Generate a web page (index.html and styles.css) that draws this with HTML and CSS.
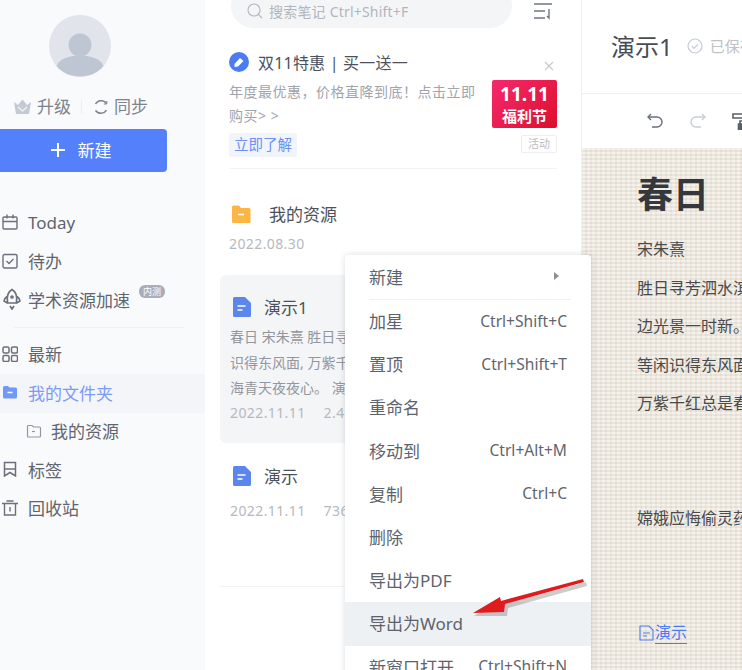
FILE: index.html
```html
<!DOCTYPE html>
<html lang="zh-CN">
<head>
    <meta charset="UTF-8">
    <title>演示1</title>
    <link rel="stylesheet" href="styles.css">
</head>
<body>
<div class="app">

    <aside class="sidebar">
        <div class="avatar">
            <svg width="62" height="62" viewBox="0 0 62 62"><circle cx="31" cy="31" r="31" fill="#e1e4ea"/><circle cx="31" cy="30" r="11.5" fill="#bfc6d3"/><path d="M7.5 51 C12 37 50 37 54.500 51 C43 65 19 65 7.500 51Z" fill="#bfc6d3"/></svg>
        </div>
        <div class="account">
            <svg width="19" height="16" viewBox="0 0 19 16"><path d="M1 3l4 3 4-5 1 0 4 5 4-3-2 12H3Z" fill="#c3cad4"/><path d="M5 8l4.500 4L14 8" fill="none" stroke="#eef0f4" stroke-width="1.500"/></svg>
            <span class="account-text">升级</span>
            <i class="account-line"></i>
            <svg width="16" height="16" viewBox="0 0 16 16" fill="none" stroke="#7d838c" stroke-width="1.500"><path d="M13.500 4.500A6.500 6.500 0 0 0 2.500 5"/><path d="M2.500 11.500A6.500 6.500 0 0 0 13.500 11"/><path d="M13.800 2v3h-3" stroke-width="1"/></svg>
            <span class="account-text">同步</span>
        </div>
        <div class="new-btn">
            <svg width="16" height="16" viewBox="0 0 16 16"><path d="M8 1v14M1 8h14" stroke="#fff" stroke-width="2"/></svg>
            <span>新建</span>
        </div>

        <nav class="nav">
            <div class="nav-item">
                <svg class="nav-icon" viewBox="0 0 16 16" fill="none" stroke="#6b717b" stroke-width="1.400"><rect x="1" y="3" width="14" height="12" rx="1"/><path d="M1 7.500h14M5 .5v4M11 .5v4"/></svg>
                <span>Today</span>
            </div>
            <div class="nav-item">
                <svg class="nav-icon" viewBox="0 0 16 16" fill="none" stroke="#6b717b" stroke-width="1.400"><rect x="1" y="1.500" width="14" height="13.500" rx="1.500"/><path d="M4.500 8l2.500 2.500 4.500-4.500"/></svg>
                <span>待办</span>
            </div>
            <div class="nav-item">
                <svg class="nav-icon rocket" viewBox="0 0 18 22" fill="none" stroke="#6b717b" stroke-width="1.700"><path d="M9 1.500C4.500 4 3.500 8 4.500 15h9C14.500 8 13.500 4 9 1.500Z"/><path d="M4 8.500C2 10 1 11.500 1 13l3.500 2M14 8.500c2 1.500 3 3 3 4.500l-3.500 2M7 18l2 3 2-3"/><circle cx="9" cy="9" r="1"/></svg>
                <span>学术资源加速</span>
                <em class="beta">内测</em>
            </div>
            <div class="nav-line"></div>
            <div class="nav-item">
                <svg class="nav-icon" viewBox="0 0 16 16" fill="none" stroke="#6b717b" stroke-width="1.500"><rect x="1" y="1" width="6" height="6" rx="1.500"/><rect x="9.500" y="1" width="6" height="6" rx="1.500"/><rect x="1" y="9.500" width="6" height="6" rx="1.500"/><rect x="9.500" y="9.500" width="6" height="6" rx="1.500"/></svg>
                <span>最新</span>
            </div>
            <div class="nav-item nav-active">
                <svg class="nav-icon" viewBox="0 0 16 16"><path d="M1 3.500A1.500 1.500 0 0 1 2.500 2H6l1.500 1.500h6A1.500 1.500 0 0 1 15 5v8a1.500 1.500 0 0 1-1.500 1.500h-11A1.500 1.500 0 0 1 1 13Z" fill="#6f98f8"/><path d="M5.500 8.500h5" stroke="#fff" stroke-width="1.500"/></svg>
                <span>我的文件夹</span>
            </div>
            <div class="nav-item nav-sub">
                <svg class="nav-icon" viewBox="0 0 16 16" fill="none" stroke="#9298a2" stroke-width="1.200"><path d="M1.500 3.500a1 1 0 0 1 1-1H6L7.500 4h6a1 1 0 0 1 1 1v8a1 1 0 0 1-1 1h-11a1 1 0 0 1-1-1Z"/><path d="M6 8.500h3"/></svg>
                <span>我的资源</span>
            </div>
            <div class="nav-item">
                <svg class="nav-icon" viewBox="0 0 16 16" fill="none" stroke="#6b717b" stroke-width="1.500"><path d="M2.500 15V1.500h11V15L8 11.500Z"/><path d="M2.500 8h11"/></svg>
                <span>标签</span>
            </div>
            <div class="nav-item">
                <svg class="nav-icon" viewBox="0 0 16 16" fill="none" stroke="#6b717b" stroke-width="1.400"><path d="M0 3.500h16M4.500 1h7"/><path d="M2.500 3.500V15h11V3.500"/><path d="M8 7v4.500"/></svg>
                <span>回收站</span>
            </div>
        </nav>
    </aside>

    <section class="list">
        <div class="search-row">
            <div class="search">
                <svg width="16" height="16" viewBox="0 0 16 16" fill="none" stroke="#b5bac3" stroke-width="1.200"><circle cx="7" cy="7" r="6"/><path d="M11.500 11.500L15 15"/></svg>
                <span>搜索笔记 Ctrl+Shift+F</span>
            </div>
            <svg class="sort" width="20" height="18" viewBox="0 0 20 18" fill="none" stroke="#6f7683" stroke-width="1.400"><path d="M1 2h18M1 9h11M1 16h11M16 7v9l-2-2"/></svg>
        </div>

        <div class="promo">
            <div class="promo-main">
                <div class="promo-title">
                    <svg width="20" height="20" viewBox="0 0 20 20"><circle cx="10" cy="10" r="10" fill="#4b7cf3"/><path d="M5.500 12l5.500-6 3.500 3-5.500 5.500-3.500.5Z" fill="#fff"/></svg>
                    <span>双11特惠 | 买一送一</span>
                </div>
                <p class="promo-desc">年度最优惠，价格直降到底！点击立即购买&gt; &gt;</p>
                <span class="promo-btn">立即了解</span>
            </div>
            <div class="promo-side">
                <svg class="promo-close" width="10" height="10" viewBox="0 0 10 10"><path d="M1 1l8 8M9 1l-8 8" stroke="#c6cad1" stroke-width="1.300"/></svg>
                <div class="ad">
                    <b class="ad-num">11.11</b>
                    <b class="ad-name">福利节</b>
                </div>
                <span class="ad-tag">活动</span>
            </div>
        </div>

        <div class="note note-folder">
            <div class="note-title">
                <svg class="folder-icon" width="20" height="20" viewBox="0 0 20 20"><path d="M1 3a1.500 1.500 0 0 1 1.500-1.500H8L10 4h8a1.500 1.500 0 0 1 1.500 1.500V18a1 1 0 0 1-1 1h-16A1.500 1.500 0 0 1 1 17.500Z" fill="#fdb643"/><path d="M7 10.500h6" stroke="#fff" stroke-width="1.600"/></svg>
                <span>我的资源</span>
            </div>
            <div class="note-meta">2022.08.30</div>
        </div>

        <div class="note note-card">
            <div class="note-title">
                <svg class="doc-icon" width="18" height="20" viewBox="0 0 18 20"><path d="M1.500 0H12l6 6v12.500a1.500 1.500 0 0 1-1.500 1.500h-15A1.500 1.500 0 0 1 0 18.500v-17A1.500 1.500 0 0 1 1.500 0Z" fill="#5b86ee"/><path d="M4.500 9h8M4.500 13h5" stroke="#fff" stroke-width="1.500"/></svg>
                <span>演示1</span>
            </div>
            <div class="note-body">
                <div>春日 宋朱熹 胜日寻芳泗水滨，无边光景一时新。等闲</div>
                <div>识得东风面, 万紫千红总是春。嫦娥应悔偷灵药，碧</div>
                <div>海青天夜夜心。 演示</div>
            </div>
            <div class="note-meta">2022.11.11<span class="note-size">2.4KB</span></div>
        </div>

        <div class="note note-plain">
            <div class="note-title">
                <svg class="doc-icon" width="18" height="20" viewBox="0 0 18 20"><path d="M1.500 0H12l6 6v12.500a1.500 1.500 0 0 1-1.500 1.500h-15A1.500 1.500 0 0 1 0 18.500v-17A1.500 1.500 0 0 1 1.500 0Z" fill="#5b86ee"/><path d="M4.500 9h8M4.500 13h5" stroke="#fff" stroke-width="1.500"/></svg>
                <span>演示</span>
            </div>
            <div class="note-meta">2022.11.11<span class="note-size">736B</span></div>
        </div>
    </section>

    <main class="editor">
        <header class="doc-head">
            <h1>演示1</h1>
            <svg class="saved-icon" width="16" height="16" viewBox="0 0 16 16" fill="none" stroke="#c5cad3" stroke-width="1.200"><circle cx="8" cy="8" r="7"/><path d="M4.800 8.200l2.200 2.200 4-4"/></svg>
            <span class="saved">已保存</span>
        </header>
        <div class="toolbar">
            <svg class="tool" width="18" height="16" viewBox="0 0 18 16" fill="none" stroke="#6a7078" stroke-width="1.400"><path d="M2 4h9a4.500 4.500 0 0 1 0 10H6"/><path d="M5 1L2 4l3 3"/></svg>
            <svg class="tool" width="18" height="16" viewBox="0 0 18 16" fill="none" stroke="#c9cdd3" stroke-width="1.400"><path d="M16 4H7a4.500 4.500 0 0 0 0 10h5"/><path d="M13 1l3 3-3 3"/></svg>
            <svg class="tool" width="18" height="18" viewBox="0 0 18 18" fill="none" stroke="#5a6068" stroke-width="1.600"><path d="M1 2h13v4H1ZM14 4h3v5H8v3"/><rect x="6.500" y="12" width="3" height="6" fill="#5a6068"/></svg>
        </div>
        <article class="paper">
            <h2 class="poem-title">春日</h2>
            <p class="poem-line poem-author">宋朱熹</p>
            <p class="poem-line">胜日寻芳泗水滨，</p>
            <p class="poem-line">边光景一时新。</p>
            <p class="poem-line">等闲识得东风面，</p>
            <p class="poem-line">万紫千红总是春。</p>
            <p class="poem-line poem-gap">嫦娥应悔偷灵药，</p>
            <a class="poem-link">
                <svg width="15" height="16" viewBox="0 0 15 16" fill="none" stroke="#4b7cf3" stroke-width="1.100"><path d="M1 1h9l4 4v10H1Z"/><path d="M4 8h7M4 11h4"/></svg>
                <span>演示</span>
            </a>
        </article>
    </main>

    <div class="menu">
        <div class="menu-item menu-first">
            <span>新建</span>
            <i class="menu-arrow"></i>
        </div>
        <div class="menu-line"></div>
        <div class="menu-item"><span>加星</span><span class="key">Ctrl+Shift+C</span></div>
        <div class="menu-item"><span>置顶</span><span class="key">Ctrl+Shift+T</span></div>
        <div class="menu-item"><span>重命名</span></div>
        <div class="menu-item"><span>移动到</span><span class="key">Ctrl+Alt+M</span></div>
        <div class="menu-item"><span>复制</span><span class="key">Ctrl+C</span></div>
        <div class="menu-item"><span>删除</span></div>
        <div class="menu-item"><span>导出为PDF</span></div>
        <div class="menu-item menu-hover"><span>导出为Word</span></div>
        <div class="menu-item"><span>新窗口打开</span><span class="key">Ctrl+Shift+N</span></div>
    </div>

    <svg class="red-arrow" width="125" height="50" viewBox="0 0 125 50">
        <path d="M120 5 L121 9 L42 31 L41 39 L8 39 L36 24 L38 27Z" fill="#555" opacity=".3" transform="translate(1 2)"/>
        <path d="M118 4 L119 7 L40 29 L39 37 L8 38 L35 22 L36 26Z" fill="#e01b1b"/>
    </svg>

</div>
</body>
</html>
```

FILE: styles.css
```css
* {
    box-sizing: border-box;
}
html, body {
    margin: 0;
    height: 670px;
    overflow: hidden;
}
body {
    font-family: "Noto Sans", "Noto Sans CJK SC", sans-serif;
    color: #555b64;
    background: #fff;
}
p, h1, h2 {
    margin: 0;
}
.app {
    position: relative;
    display: flex;
    width: 742px;
    height: 670px;
    overflow: hidden;
}

/* left sidebar */
.sidebar {
    flex: none;
    width: 205px;
    background: #f9fafc;
}
.avatar {
    height: 62px;
    margin: 15px 0 0 49px;
}
.account {
    display: flex;
    align-items: center;
    height: 20px;
    margin: 20px 0 12px 13px;
    font-size: 17px;
    line-height: 20px;
    color: #7d838c;
}
.account-text {
    margin-left: 5px;
}
.account-line {
    width: 1px;
    height: 14px;
    margin: 0 11px 0 10px;
    background: #eceef1;
}
.new-btn {
    display: flex;
    align-items: center;
    justify-content: center;
    gap: 12px;
    width: 177px;
    height: 43px;
    padding: 0 0 2px 4px;
    margin-left: -10px;
    border-radius: 4px;
    background: #5580fb;
    color: #fff;
    font-size: 17px;
}
.nav {
    margin-top: 32px;
}
.nav-item {
    display: flex;
    align-items: center;
    height: 38.5px;
    padding: 0 0 2px 2px;
    font-size: 17px;
    color: #5f656e;
}
.nav-icon {
    flex: none;
    width: 16px;
    height: 16px;
    margin-right: 10px;
}
.rocket {
    width: 18px;
    height: 22px;
    margin: 0 7px 0 1px;
}
.beta {
    align-self: flex-start;
    margin: 4px 0 0 9px;
    padding: 0 4px;
    height: 13px;
    border-radius: 6px;
    background: #a9aeb8;
    color: #fff;
    font-size: 9px;
    line-height: 13px;
    font-style: normal;
}
.nav-line {
    height: 1px;
    margin: 7px 20px 8px 14px;
    background: #f1f2f5;
}
.nav-active {
    background: #f4f5f8;
    color: #7c9bf7;
}
.nav-sub {
    padding-left: 26px;
}
.nav-sub .nav-icon {
    margin-right: 9px;
}

/* note list */
.list {
    flex: none;
    width: 377px;
    border-right: 1px solid #eeeff2;
    background: #fff;
}
.search-row {
    display: flex;
    align-items: flex-start;
    margin-top: -16px;
    padding-left: 26px;
}
.search {
    display: flex;
    align-items: center;
    gap: 6px;
    width: 281px;
    height: 44px;
    padding: 10px 0 0 16px;
    border-radius: 22px;
    background: #f4f5f7;
    color: #b1b5bd;
    font-size: 14px;
    letter-spacing: .2px;
}
.sort {
    margin: 18px 0 0 21px;
}
.promo {
    display: flex;
    justify-content: space-between;
    width: 328px;
    margin: 24px 0 0 24px;
    padding-bottom: 11px;
    border-bottom: 1px solid #f2f3f5;
}
.promo-main {
    width: 255px;
}
.promo-title {
    display: flex;
    align-items: center;
    gap: 9px;
    height: 20px;
    padding-bottom: 1px;
    font-size: 16px;
    letter-spacing: .2px;
    color: #4d525a;
}
.promo-title svg {
    flex: none;
}
.promo-desc {
    margin: 8px 0 5px;
    font-size: 14px;
    line-height: 24px;
    letter-spacing: .5px;
    color: #a0a4ab;
}
.promo-btn {
    display: inline-block;
    width: 68px;
    height: 24px;
    border-radius: 2px;
    background: #f1f4fb;
    color: #6a8ff5;
    font-size: 14.500px;
    line-height: 23px;
    text-align: center;
}
.promo-side {
    display: flex;
    flex-direction: column;
    align-items: flex-end;
    width: 65px;
}
.promo-close {
    margin: 9px 3px 9px 0;
}
.ad {
    display: flex;
    flex-direction: column;
    align-items: center;
    width: 65px;
    height: 48px;
    border-radius: 2px;
    background: linear-gradient(135deg, #f42a6e, #dd0f2c);
    color: #fff;
}
.ad-num {
    height: 26px;
    font-size: 19px;
    line-height: 28px;
}
.ad-name {
    font-size: 15px;
    line-height: 20px;
}
.ad-tag {
    width: 36px;
    height: 18px;
    margin-top: 7px;
    border: 1px solid #eceef0;
    border-radius: 2px;
    color: #b9bdc4;
    font-size: 11px;
    line-height: 16px;
    text-align: center;
}
.note-title {
    display: flex;
    align-items: center;
    height: 22px;
    padding-bottom: 2px;
    font-size: 17px;
    color: #4d525a;
}
.note-title svg {
    flex: none;
    position: relative;
    top: 1px;
}
.note-meta {
    height: 20px;
    font-size: 14px;
    line-height: 20px;
    letter-spacing: .4px;
    color: #b5b9c0;
    white-space: nowrap;
}
.note-size {
    margin-left: 18px;
}
.note-folder {
    margin-top: 34px;
    padding-left: 24px;
}
.note-folder .note-meta {
    margin-top: 9px;
}
.folder-icon {
    margin: 0 18px 0 2px;
}
.doc-icon {
    margin: 0 13px 0 3px;
}
.note-card {
    width: 361px;
    height: 168px;
    margin: 21px 0 0 15px;
    padding: 21px 0 0 10px;
    border-radius: 6px;
    background: #f4f5f7;
}
.note-body {
    height: 77px;
    margin-top: 6px;
    font-size: 14px;
    line-height: 25.500px;
    color: #92969e;
    white-space: nowrap;
    overflow: hidden;
}
.note-card .note-meta {
    margin-top: 2px;
}
.note-plain {
    height: 144px;
    margin-left: 15px;
    padding: 22px 0 0 10px;
    border-bottom: 1px solid #f2f3f5;
}
.note-plain .note-meta {
    margin-top: 14px;
}

/* editor */
.editor {
    flex: none;
    width: 160px;
    display: flex;
    flex-direction: column;
    overflow: hidden;
}
.doc-head {
    display: flex;
    align-items: center;
    flex: none;
    height: 94px;
    padding: 0 0 2px 29px;
    border-bottom: 1px solid #f0f1f3;
    white-space: nowrap;
}
.doc-head h1 {
    margin-right: 14px;
    font-size: 24px;
    font-weight: 400;
    color: #474c54;
}
.saved-icon {
    flex: none;
}
.saved {
    margin-left: 7px;
    font-size: 15px;
    color: #bdc1c8;
}
.toolbar {
    display: flex;
    align-items: center;
    gap: 25px;
    flex: none;
    height: 54px;
    padding-left: 64px;
}
.tool {
    flex: none;
}
.paper {
    flex: 1;
    padding: 24px 0 0 55px;
    background-color: #efeae1;
    background-image:
        repeating-linear-gradient(0deg, rgba(255,255,255,.22) 0 2px, rgba(150,135,115,.08) 2px 4px),
        repeating-linear-gradient(90deg, rgba(255,255,255,.16) 0 3px, rgba(150,135,115,.07) 3px 5px);
    white-space: nowrap;
}
.poem-title {
    width: 80px;
    height: 46px;
    margin-bottom: 20px;
    font-size: 36px;
    line-height: 46px;
    font-weight: 700;
    color: #34373b;
}
.poem-line {
    height: 38.500px;
    font-size: 16px;
    line-height: 22px;
    color: #4a4b4c;
}
.poem-gap {
    margin-top: 76px;
}
.poem-link {
    display: flex;
    align-items: center;
    gap: 1px;
    margin-top: 76px;
    font-size: 16px;
    line-height: 22px;
    color: #4b7cf3;
}
.poem-link svg {
    flex: none;
    margin-left: 2px;
}
.poem-link span {
    border-bottom: 1px solid #4b7cf3;
}

/* context menu */
.menu {
    position: absolute;
    left: 345px;
    top: 255px;
    width: 246px;
    padding-bottom: 20px;
    border-radius: 4px;
    background: #fff;
    box-shadow: 0 0 6px rgba(60, 70, 90, .18);
    font-size: 17px;
    color: #5d636c;
}
.menu-item {
    display: flex;
    align-items: center;
    justify-content: space-between;
    height: 43.200px;
    padding: 0 24px 2px;
}
.menu-first {
    height: 44px;
}
.menu-line {
    height: 1px;
    margin: 0 20px 0 24px;
    background: #eff0f2;
}
.menu-arrow {
    width: 0;
    height: 0;
    margin-right: 8px;
    border-left: 5px solid #8a9098;
    border-top: 4px solid transparent;
    border-bottom: 4px solid transparent;
}
.menu-hover {
    background: #eef1f4;
}
.key {
    font-size: 15.600px;
    color: #5f656e;
}
.red-arrow {
    position: absolute;
    left: 465px;
    top: 575px;
}
```
